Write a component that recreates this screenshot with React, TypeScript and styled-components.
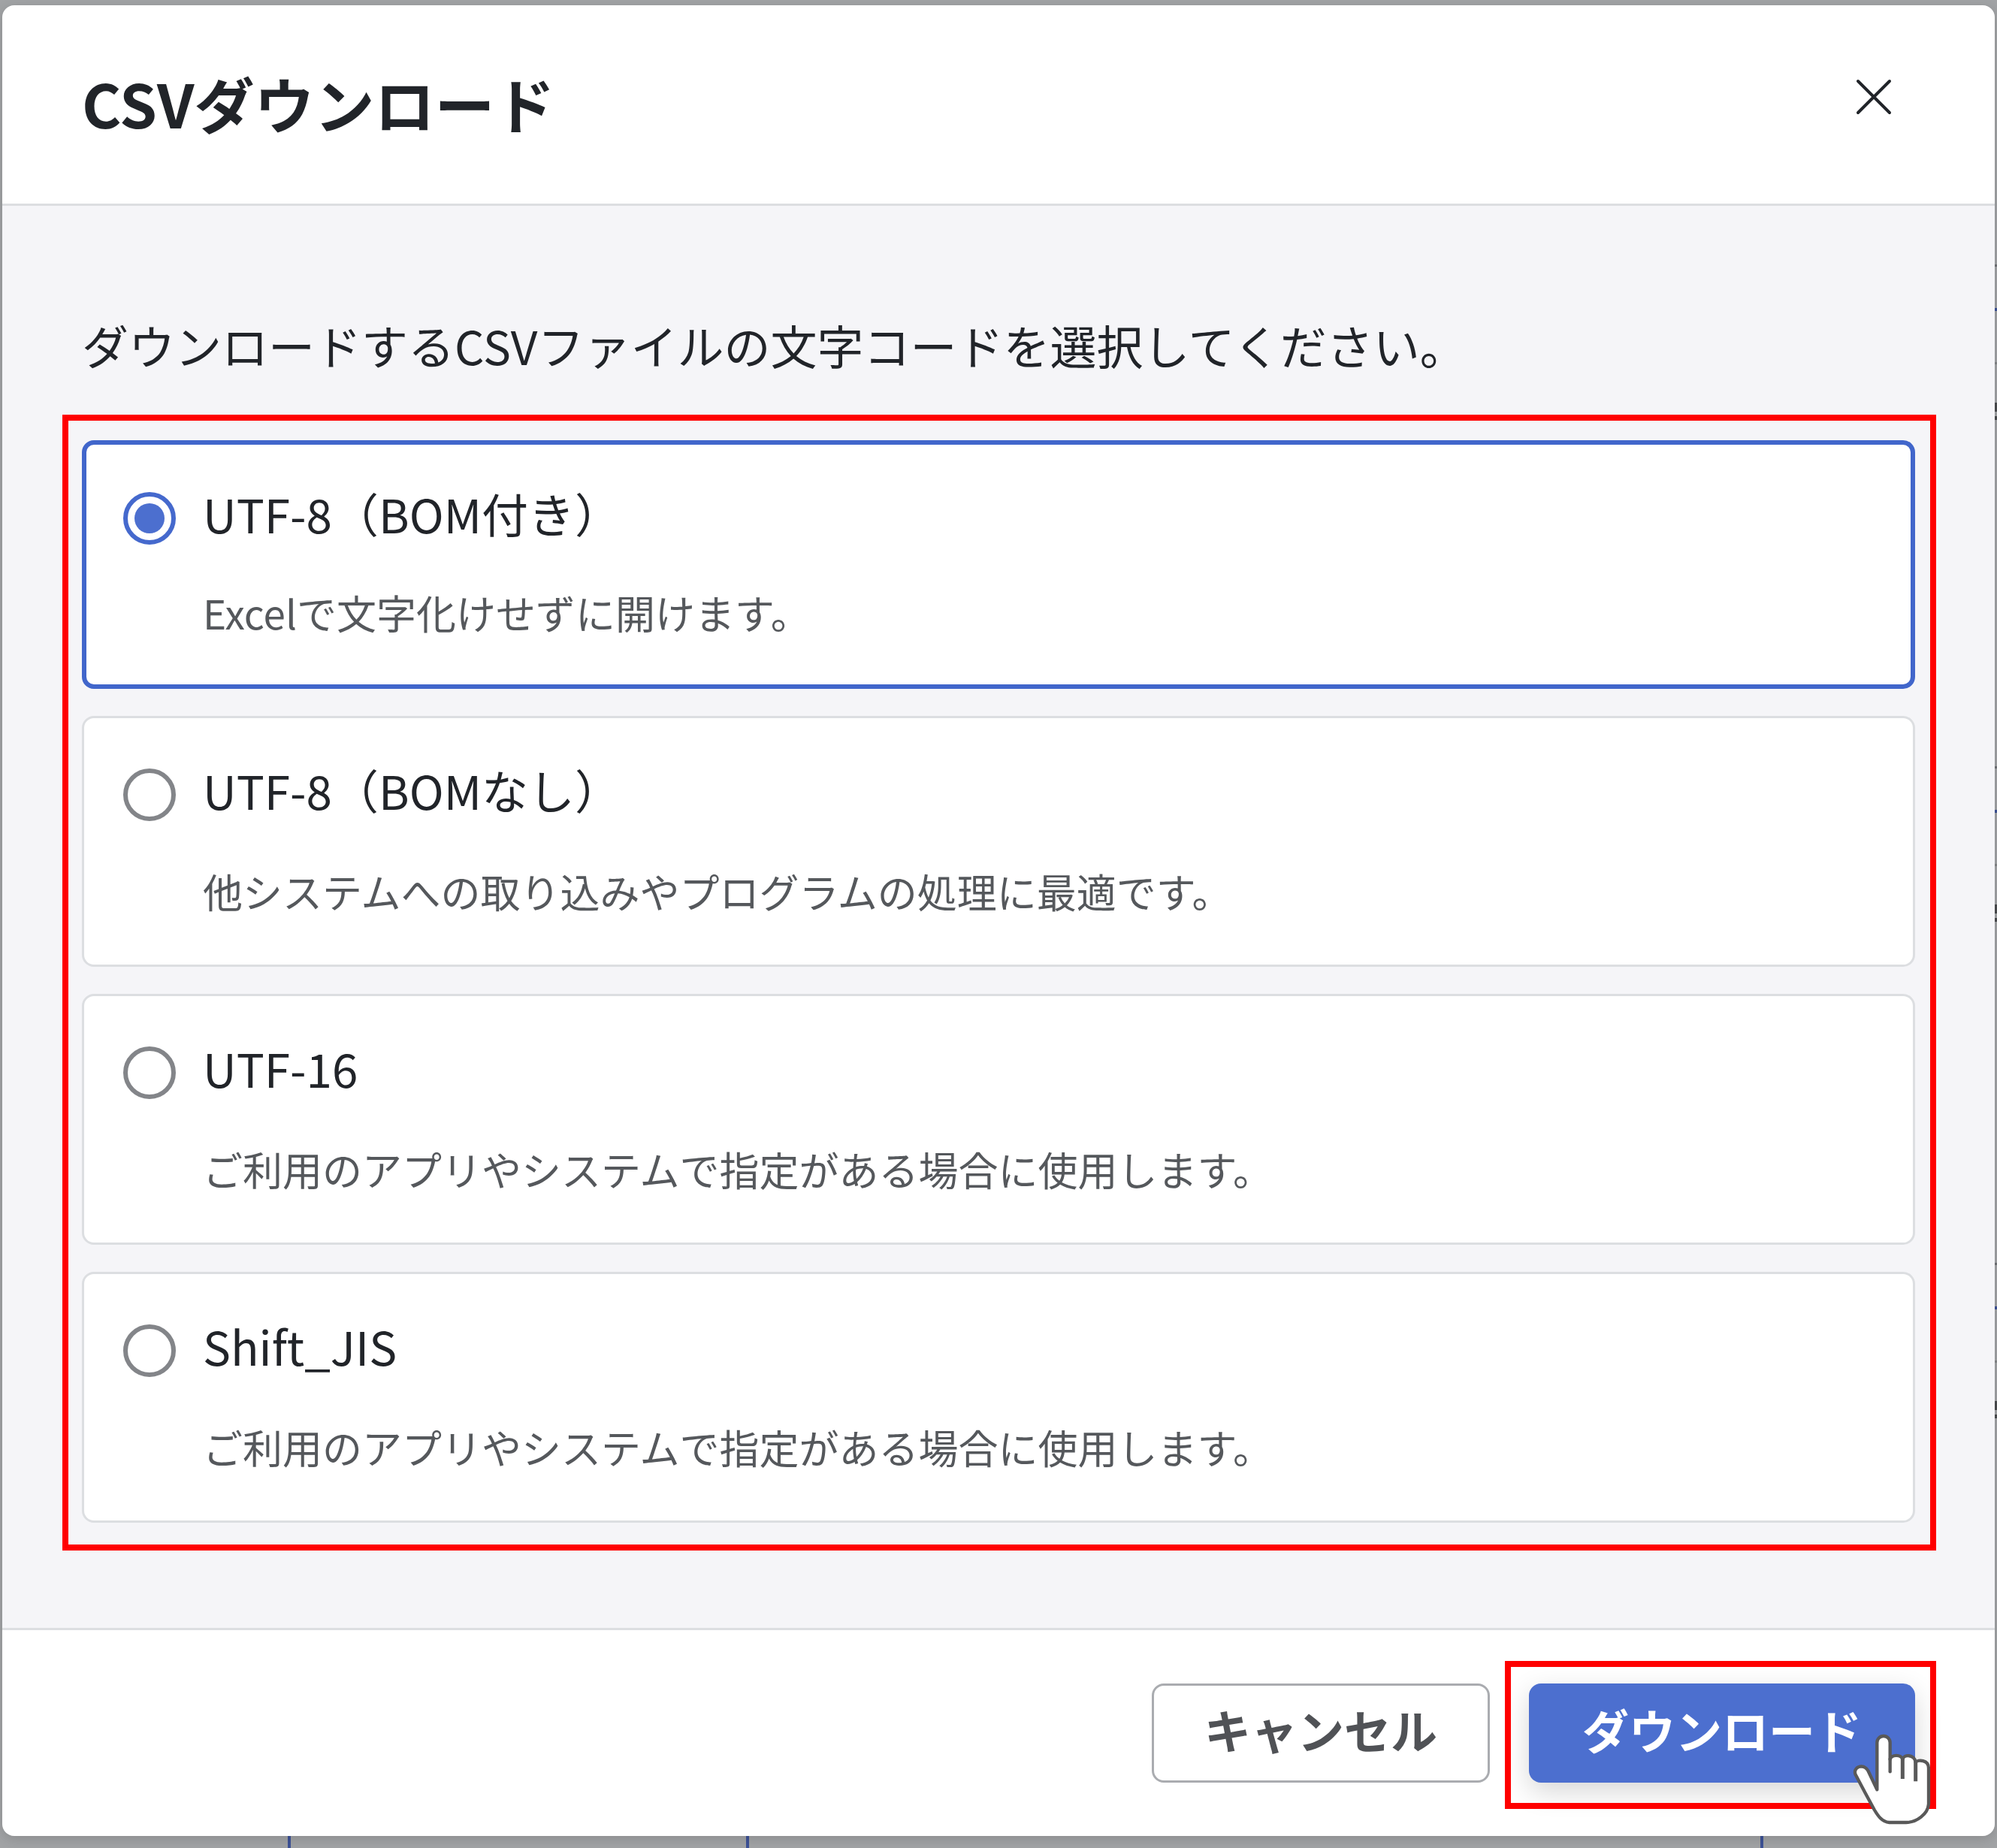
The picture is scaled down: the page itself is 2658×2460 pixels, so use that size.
import React, { useState } from "react";
import styled, { createGlobalStyle } from "styled-components";

const GlobalStyle = createGlobalStyle`
  *, *::before, *::after { box-sizing: border-box; }
  body {
    margin: 0;
    background: #a1a3a5;
    color: #212429;
    font-family: "Noto Sans CJK JP", sans-serif;
  }
`;

const Backdrop = styled.div`
  position: relative;
  min-height: 100vh;
  padding: 7px 3px 15px;
  overflow: hidden;
  background: #a1a3a5;
`;

/* Column rules of the table that lies under the dialog */
const HiddenTable = styled.div`
  position: absolute;
  inset: 50% 0 0;
  display: grid;
  grid-template-columns: 387fr 610fr 1350fr 311fr;
`;

const HiddenColumn = styled.div`
  border-right: 4px solid #3d5296;
  &:last-child {
    border-right: 0;
  }
`;

const EdgeMark = styled.span<{ $tone: string; $thick: number }>`
  position: absolute;
  right: 0;
  width: 3px;
  height: ${(p) => p.$thick}px;
  background: ${(p) => p.$tone};
`;

const Dialog = styled.form`
  position: relative;
  display: flex;
  flex-direction: column;
  overflow: hidden;
  border-radius: 16px;
  background: #fff;
`;

const DialogShadow = styled.div`
  position: relative;
  border-radius: 16px;
  box-shadow: 0 4px 16px rgba(0, 0, 0, 0.14);
`;

const Header = styled.header`
  display: flex;
  align-items: flex-start;
  justify-content: space-between;
  padding: 71px 106px 77px;
  border-bottom: 3px solid #dcdee1;
`;

const Title = styled.h1`
  margin: 0;
  font-size: 80px;
  line-height: 116px;
  font-weight: 700;
`;

const CloseButton = styled.button`
  display: flex;
  align-items: center;
  justify-content: center;
  width: 110px;
  height: 102px;
  padding: 0;
  border: 0;
  background: none;
  color: #212429;
  cursor: pointer;
`;

const Body = styled.div`
  padding: 141px 106px 140px;
  background: #f5f5f8;
`;

const Lead = styled.p`
  margin: 0 0 83px;
  font-size: 62px;
  line-height: 88px;
`;

const Marked = styled.div<{ $inset: string }>`
  position: relative;
  &::after {
    content: "";
    position: absolute;
    inset: ${(p) => p.$inset};
    border: 8px solid #f00;
    pointer-events: none;
  }
`;

const OptionList = styled.div`
  display: flex;
  flex-direction: column;
  gap: 36px;
`;

const OptionCard = styled.label<{ $selected: boolean }>`
  display: flex;
  align-items: flex-start;
  gap: 36px;
  padding: ${(p) => (p.$selected ? "47px 49px 57px" : "51px 52px 59px")};
  border: ${(p) => (p.$selected ? "6px solid #4166cb" : "3px solid #dcdee1")};
  border-radius: 16px;
  background: #fff;
  cursor: pointer;
`;

const Radio = styled.input`
  appearance: none;
  display: grid;
  place-items: center;
  flex: none;
  width: 70px;
  height: 70px;
  margin: 16px 0 0;
  border: 6px solid #838589;
  border-radius: 50%;
  background: #fff;
  &:checked {
    border-color: #4569cd;
  }
  &:checked::before {
    content: "";
    width: 40px;
    height: 40px;
    border-radius: 50%;
    background: #4c6fcf;
  }
`;

const OptionText = styled.span<{ $selected: boolean }>`
  display: flex;
  flex-direction: column;
  gap: ${(p) => (p.$selected ? 50 : 53)}px;
`;

const OptionName = styled.span`
  font-size: 62px;
  line-height: 88px;
`;

const OptionNote = styled.span`
  color: #55585c;
  font-size: 53px;
  line-height: 77px;
`;

const Footer = styled.footer`
  display: flex;
  justify-content: flex-end;
  gap: 52px;
  padding: 71px 106px;
  border-top: 3px solid #dcdee1;
`;

const Button = styled.button<{ $primary?: boolean }>`
  height: 132px;
  padding: 0 ${(p) => (p.$primary ? 71 : 67)}px 10px;
  border: ${(p) => (p.$primary ? "0" : "3px solid #aaacb0")};
  border-radius: 16px;
  background: ${(p) => (p.$primary ? "#4c6fcf" : "#fff")};
  box-shadow: ${(p) => (p.$primary ? "0 12px 36px rgba(0, 0, 0, 0.16)" : "none")};
  color: ${(p) => (p.$primary ? "#fff" : "#505256")};
  font-family: inherit;
  font-size: 62px;
  line-height: 88px;
  font-weight: 700;
  cursor: pointer;
`;

const HandPointer = styled.svg`
  position: absolute;
  z-index: 1;
  right: -21px;
  bottom: -56px;
  width: 104px;
  height: 121px;
  pointer-events: none;
`;

const options = [
  { id: "utf8-bom", name: "UTF-8（BOM付き）", note: "Excelで文字化けせずに開けます。" },
  { id: "utf8", name: "UTF-8（BOMなし）", note: "他システムへの取り込みやプログラムの処理に最適です。" },
  { id: "utf16", name: "UTF-16", note: "ご利用のアプリやシステムで指定がある場合に使用します。" },
  { id: "sjis", name: "Shift_JIS", note: "ご利用のアプリやシステムで指定がある場合に使用します。" },
];

const rowTops = [352, 1020, 1681];
const rowMarks = [
  { dy: 0, tone: "#707276", thick: 3 },
  { dy: 58, tone: "#3d5296", thick: 4 },
  { dy: 130, tone: "#85878a", thick: 3 },
  { dy: 184, tone: "#4a4c4f", thick: 12 },
  { dy: 202, tone: "#4a4c4f", thick: 5 },
];

export default function App() {
  const [encoding, setEncoding] = useState("utf8-bom");

  return (
    <>
      <GlobalStyle />
      <Backdrop>
        <HiddenTable aria-hidden="true">
          <HiddenColumn />
          <HiddenColumn />
          <HiddenColumn />
          <HiddenColumn />
        </HiddenTable>
        {rowTops.map((top) =>
          rowMarks.map((mark) => (
            <EdgeMark
              key={top + mark.dy}
              $tone={mark.tone}
              $thick={mark.thick}
              style={{ top: top + mark.dy }}
            />
          ))
        )}
        <DialogShadow>
          <Dialog
            role="dialog"
            aria-labelledby="dialog-title"
            onSubmit={(e: React.FormEvent) => e.preventDefault()}
          >
            <Header>
              <Title id="dialog-title">CSVダウンロード</Title>
              <CloseButton type="button" aria-label="閉じる">
                <svg width="48" height="48" viewBox="0 0 48 48" fill="none" stroke="currentColor" strokeWidth="4" strokeLinecap="round">
                  <path d="M3 3 45 45M45 3 3 45" />
                </svg>
              </CloseButton>
            </Header>
            <Body>
              <Lead id="lead">ダウンロードするCSVファイルの文字コードを選択してください。</Lead>
              <Marked $inset="-34px -28px -37px -26px">
                <OptionList role="radiogroup" aria-labelledby="lead">
                  {options.map((o) => {
                    const selected = o.id === encoding;
                    return (
                      <OptionCard key={o.id} htmlFor={o.id} $selected={selected}>
                        <Radio
                          type="radio"
                          id={o.id}
                          name="encoding"
                          value={o.id}
                          checked={selected}
                          onChange={() => setEncoding(o.id)}
                        />
                        <OptionText $selected={selected}>
                          <OptionName>{o.name}</OptionName>
                          <OptionNote>{o.note}</OptionNote>
                        </OptionText>
                      </OptionCard>
                    );
                  })}
                </OptionList>
              </Marked>
            </Body>
            <Footer>
              <Button type="button">キャンセル</Button>
              <Marked $inset="-30px -28px -35px -32px">
                <Button type="submit" $primary>
                  ダウンロード
                </Button>
                <HandPointer viewBox="79 85 312 363" aria-hidden="true">
                  <path
                    d="M176 308V120a26 26 0 0 1 52 0V188C232 166 274 166 278 188C282 166 326 166 330 198C340 188 382 188 382 222V365C379 405 335 439 292 439H225C195 437 178 410 165 388C142 345 112 290 90 248C82 228 98 215 114 215C128 216 134 222 140 232Z"
                    fill="#fff"
                    stroke="#595959"
                    strokeWidth="13"
                    strokeLinejoin="round"
                  />
                  <path d="M228 185V236" stroke="#595959" strokeWidth="13" strokeLinecap="round" />
                  <path d="M278 185V265M330 195V275" stroke="#595959" strokeWidth="15" />
                </HandPointer>
              </Marked>
            </Footer>
          </Dialog>
        </DialogShadow>
      </Backdrop>
    </>
  );
}
